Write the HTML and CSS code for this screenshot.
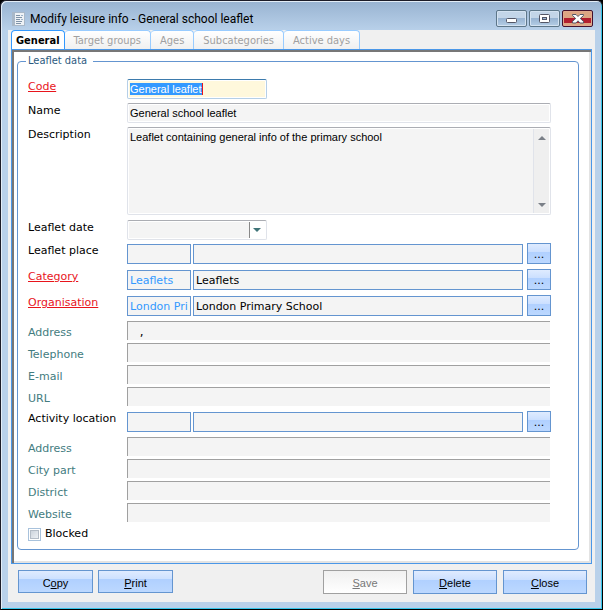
FILE: index.html
```html
<!DOCTYPE html>
<html lang="en">
<head>
  <meta charset="UTF-8">
  <meta name="viewport" content="width=device-width, initial-scale=1.0">
  <title>Modify leisure info - General school leaflet</title>
  <link rel="stylesheet" href="styles.css">
</head>
<body>
  <div class="window">
    <!-- Title bar -->
    <header class="titlebar">
      <svg class="app-icon" width="13" height="14" viewBox="0 0 13 14">
        <rect x="0.5" y="0.5" width="12" height="13" fill="#eef2f6" stroke="#a9b8c8"/>
        <rect x="1" y="1" width="2" height="12" fill="#a9b8c8"/>
        <path d="M4 3.500h4M4 5.500h6M4 7.500h4M4 9.500h6M4 11.500h5" stroke="#7f93a8"/>
        <path d="M9 3.500h2M9 7.500h2" stroke="#9db4cb"/>
      </svg>
      <h1>Modify leisure info - General school leaflet</h1>
      <div class="window-buttons">
        <button class="window-button" aria-label="Minimize">
          <svg width="12" height="10" viewBox="0 0 12 10"><rect x="0.5" y="4.5" width="10" height="4" rx="1" fill="#fff" stroke="#535666"/></svg>
        </button>
        <button class="window-button" aria-label="Maximize">
          <svg width="12" height="10" viewBox="0 0 12 10"><rect x="0.5" y="0.5" width="10" height="8" rx="1" fill="#fff" stroke="#535666"/><rect x="3.5" y="3.5" width="4" height="2" fill="#9bb8d8" stroke="#535666"/></svg>
        </button>
        <button class="window-button window-close" aria-label="Close window">
          <svg width="12" height="10" viewBox="0 0 12 10"><path d="M0.500 0.500h3.500l2 2 2-2h3.500v1L8.300 4.500l3.200 3v1.500h-3.500l-2-2.200-2 2.200h-3.500V7.500l3.200-3L0.500 1.500z" fill="#fff" stroke="#535666"/></svg>
        </button>
      </div>
    </header>

    <main class="content">
      <nav class="tabs">
        <button class="tab active">General</button>
        <button class="tab">Target groups</button>
        <button class="tab">Ages</button>
        <button class="tab">Subcategories</button>
        <button class="tab">Active days</button>
      </nav>

      <div class="panel">
        <fieldset class="leaflet">
          <legend>Leaflet data</legend>

          <!-- General fields -->
          <div class="group general">
            <div class="row">
              <label class="required" for="code">Code</label>
              <input class="field short code" type="text" id="code" value="General leaflet" autofocus>
            </div>
            <div class="row">
              <label for="name">Name</label>
              <input class="field" type="text" id="name" value="General school leaflet" readonly>
            </div>
            <div class="row">
              <label for="description">Description</label>
              <div class="memo">
                <textarea id="description" readonly>Leaflet containing general info of the primary school</textarea>
                <div class="scrollbar">
                  <svg width="8" height="4" viewBox="0 0 8 4"><path d="M4 0l4 4H0z" fill="#7b8088"/></svg>
                  <svg width="8" height="4" viewBox="0 0 8 4"><path d="M0 0h8L4 4z" fill="#7b8088"/></svg>
                </div>
              </div>
            </div>
            <div class="row date-row">
              <label for="date">Leaflet date</label>
              <div class="date">
                <input type="text" id="date">
                <button aria-label="Pick date">
                  <svg width="8" height="4" viewBox="0 0 8 4"><path d="M0 0h8L4 4z" fill="#3f7478"/></svg>
                </button>
              </div>
            </div>
          </div>

          <!-- Lookup fields -->
          <div class="group lookups">
            <div class="row">
              <label for="place">Leaflet place</label>
              <input class="lookup lookup-code" type="text" id="place">
              <input class="lookup" type="text" aria-label="Leaflet place name">
              <button class="browse" aria-label="Browse leaflet place">...</button>
            </div>
            <div class="row">
              <label class="required" for="category">Category</label>
              <input class="lookup lookup-code" type="text" id="category" value="Leaflets">
              <input class="lookup" type="text" aria-label="Category name" value="Leaflets">
              <button class="browse" aria-label="Browse category">...</button>
            </div>
            <div class="row">
              <label class="required" for="organisation">Organisation</label>
              <input class="lookup lookup-code" type="text" id="organisation" value="London Primary School">
              <input class="lookup" type="text" aria-label="Organisation name" value="London Primary School">
              <button class="browse" aria-label="Browse organisation">...</button>
            </div>
          </div>

          <div class="group details">
            <div class="row">
              <label for="org-address">Address</label>
              <input class="detail" type="text" id="org-address" value="  ," readonly>
            </div>
            <div class="row">
              <label for="telephone">Telephone</label>
              <input class="detail" type="text" id="telephone" readonly>
            </div>
            <div class="row">
              <label for="email">E-mail</label>
              <input class="detail" type="text" id="email" readonly>
            </div>
            <div class="row">
              <label for="url">URL</label>
              <input class="detail" type="text" id="url" readonly>
            </div>
          </div>

          <div class="group lookups">
            <div class="row">
              <label for="location">Activity location</label>
              <input class="lookup lookup-code" type="text" id="location">
              <input class="lookup" type="text" aria-label="Activity location name">
              <button class="browse" aria-label="Browse activity location">...</button>
            </div>
          </div>

          <div class="group details">
            <div class="row">
              <label for="address">Address</label>
              <input class="detail" type="text" id="address" readonly>
            </div>
            <div class="row">
              <label for="city-part">City part</label>
              <input class="detail" type="text" id="city-part" readonly>
            </div>
            <div class="row">
              <label for="district">District</label>
              <input class="detail" type="text" id="district" readonly>
            </div>
            <div class="row">
              <label for="website">Website</label>
              <input class="detail" type="text" id="website" readonly>
            </div>
          </div>

          <div class="blocked">
            <input type="checkbox" id="blocked">
            <label for="blocked">Blocked</label>
          </div>
        </fieldset>
      </div>

      <footer class="actions">
        <button class="action">C<u>o</u>py</button>
        <button class="action"><u>P</u>rint</button>
        <div class="actions-right">
          <button class="action" disabled><u>S</u>ave</button>
          <button class="action"><u>D</u>elete</button>
          <button class="action"><u>C</u>lose</button>
        </div>
      </footer>
    </main>
  </div>

  <script>
    const code = document.getElementById("code");
    code.focus();
    code.select();
  </script>
</body>
</html>
```
FILE: styles.css
```css
* {
  box-sizing: border-box;
}

body {
  margin: 0;
  background-color: #000;
  font-family: "DejaVu Sans", sans-serif;
  font-size: 11px;
  line-height: 14px;
  color: #000;
}

input, textarea, button {
  margin: 0;
  font-family: inherit;
  font-size: inherit;
  color: inherit;
  border-radius: 0;
  outline: none;
}

.window {
  padding: 0 7px 7px;
  border: 1px solid #1c1c28;
  border-right-color: #000;
  border-bottom-color: #000;
  border-radius: 6px 6px 0 0;
  background: linear-gradient(#98b3d1, #b9d1ea 30px) #b9d1ea;
  box-shadow: inset 1px 1px #e3edf7, inset -1px -1px #35c5ea;
}

.titlebar {
  display: flex;
  align-items: center;
  height: 29px;
  padding: 6px 2px 0 4px;
}

.titlebar h1 {
  flex: 1;
  margin: 0 0 0 5px;
  font-family: Roboto, sans-serif;
  font-size: 12px;
  font-weight: normal;
  line-height: 16px;
}

.window-buttons {
  display: flex;
  gap: 2px;
}

.window-button {
  display: flex;
  align-items: center;
  justify-content: center;
  width: 31px;
  height: 17px;
  padding: 0;
  border: 1px solid #5d7689;
  border-radius: 2px;
  background: linear-gradient(#c3d5e8 50%, #98b4d2 50%, #b4cde6);
  box-shadow: inset 0 0 0 1px #d3e2f1;
}

.window-close {
  border-color: #43102c;
  background: linear-gradient(#dca583 50%, #b01c2e 50%, #b3202f 80%, #dca583 80%);
  box-shadow: inset 0 0 0 1px #e0a98c;
}

.content {
  background-color: #f0f0f0;
}

/* Tabs */
.tabs {
  display: flex;
  padding-left: 3px;
}

.tab {
  height: 19px;
  padding: 0 9px;
  border: 1px solid #99ccff;
  border-width: 1px 1px 0 0;
  border-radius: 4px 4px 0 0;
  background: linear-gradient(#fff, #f0f0f0);
  font-family: "DejaVu Sans Condensed", "DejaVu Sans", sans-serif;
  color: #a0a0a0;
}

.tab.active {
  padding: 0 4px;
  border-color: #3399ff;
  border-left-width: 1px;
  background: #fff;
  font-weight: bold;
  color: #000;
}

.panel {
  margin: 0 3px;
  padding: 4px 12px 13px 5px;
  border: 1px solid #4a97e8;
  background-color: #fff;
  box-shadow: inset 2px 2px #777, inset -2px -2px #e3e3e3;
}

.leaflet {
  min-width: 0;
  margin: 0;
  padding: 11px 27px 8px 10px;
  border: 1px solid #6495d0;
  border-radius: 4px;
}

.leaflet legend {
  margin-left: -2px;
  padding: 0 6px 0 2px;
  font-family: "DejaVu Sans Condensed", "DejaVu Sans", sans-serif;
  color: #2b5a80;
}

/* Form rows */
.group {
  display: flex;
  flex-direction: column;
  gap: 4px;
  margin-bottom: 5px;
}

.row {
  display: flex;
}

.row label {
  flex: 0 0 99px;
  white-space: nowrap;
}

.row label.required {
  color: #e8141c;
  text-decoration: underline;
}

.general label {
  padding-top: 1px;
}

.field, .memo, .date {
  flex: 1;
  min-width: 0;
  height: 20px;
  padding: 0 2px;
  border: 1px solid #e0e3ea;
  border-top-color: #abadb3;
  border-radius: 2px;
  background-color: #f4f4f4;
  box-shadow: inset 0 0 0 1px #fff;
  font-family: "Liberation Sans", sans-serif;
}

.short {
  flex: 0 0 140px;
}

/* The red bar is the text cursor after the selected code */
.code {
  border-color: #b5cfe7;
  border-top-color: #3d7bad;
  background: linear-gradient(#e8141c, #e8141c) 74px 3px / 1px 12px no-repeat #fff8dc;
}

.code::selection {
  background-color: #3399ff;
  color: #fff;
}

.memo {
  display: flex;
  height: 88px;
  padding: 1px;
}

.memo textarea {
  flex: 1;
  padding: 1px;
  border: none;
  background: none;
  line-height: 14px;
  resize: none;
}

.scrollbar {
  display: flex;
  flex-direction: column;
  align-items: center;
  justify-content: space-between;
  width: 16px;
  padding: 7px 0 6px;
  border-left: 1px solid #e0e3ea;
  background-color: #efefef;
}

.date-row {
  margin-top: 1px;
}

.date {
  display: flex;
  flex: 0 0 140px;
  padding: 1px;
}

.date input {
  flex: 1;
  min-width: 0;
  padding: 0 2px;
  border: none;
  background: none;
}

.date button {
  display: flex;
  align-items: center;
  width: 16px;
  padding: 0 0 0 3px;
  border: none;
  border-left: 1px solid #888;
  background-color: #fff;
}

.lookups {
  gap: 6px;
}

.group.lookups {
  margin-top: -1px;
}

.lookup {
  flex: 1;
  min-width: 0;
  height: 20px;
  padding: 0 2px;
  border: 1px solid #6495d0;
  background-color: #f4f4f4;
}

.lookup-code {
  flex: 0 0 64px;
  margin-right: 2px;
  color: #3399ff;
}

.browse {
  width: 24px;
  height: 21px;
  margin: -1px 0 0 4px;
  padding: 2px 0 0;
  border: 1px solid #6495d0;
  background: linear-gradient(#dfebff, #cce0ff 40%, #b0d0ff 40%, #bcd8ff);
  line-height: 14px;
}

.details {
  gap: 3px;
  margin-bottom: 7px;
}

.details label {
  padding-top: 5px;
  line-height: 13px;
  color: #437c80;
}

.detail {
  flex: 1;
  min-width: 0;
  height: 19px;
  margin-right: 1px;
  padding: 2px 4px 0;
  border: 1px solid #a0a0a0;
  border-width: 1px 0 0 1px;
  background-color: #f4f4f4;
  font-size: 12px;
}

.blocked {
  display: flex;
  align-items: center;
  gap: 4px;
  margin-top: -2px;
}

.blocked input {
  appearance: none;
  width: 13px;
  height: 13px;
  border: 1px solid #a8c2dc;
  background: linear-gradient(135deg, #c4ccd6, #f6f8fa);
  box-shadow: inset 0 0 0 1px #fff, inset 0 0 0 2px #b4bcc6;
}

/* Bottom buttons */
.actions {
  display: flex;
  align-items: flex-start;
  gap: 5px;
  padding: 6px 8px 8px 10px;
}

.actions-right {
  display: flex;
  gap: 6px;
  margin-left: auto;
}

.action {
  width: 75px;
  height: 23px;
  padding: 2px 0 0;
  border: 1px solid #6495d0;
  background: linear-gradient(#dfebff, #cce0ff 40%, #b0d0ff 40%, #bcd8ff);
  font-family: "Liberation Sans", sans-serif;
}

.actions-right .action {
  width: 84px;
  height: 24px;
}

.action:disabled {
  border-color: #a0a0a0;
  background: linear-gradient(#f0f0f0, #fff);
  color: #777;
}
```
